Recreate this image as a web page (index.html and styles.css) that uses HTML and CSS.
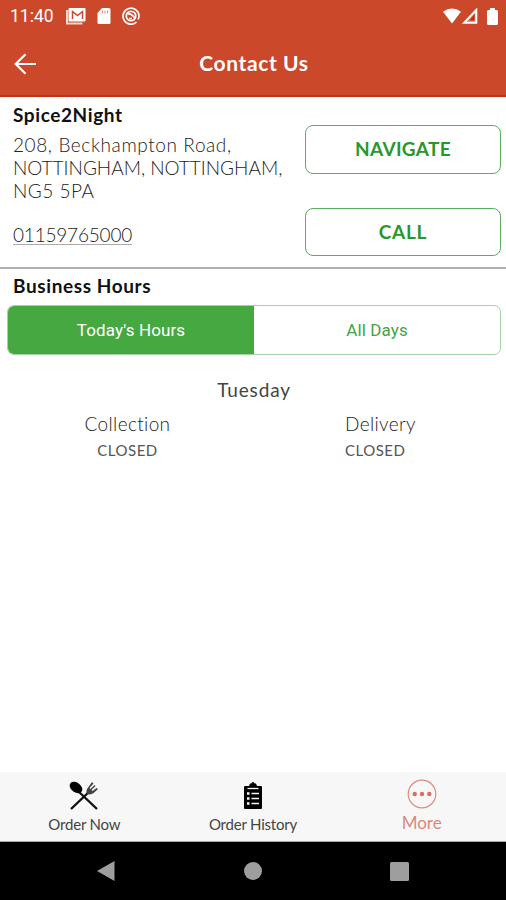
FILE: index.html
```html
<!DOCTYPE html>
<html lang="en">
  <head>
    <meta charset="UTF-8" />
    <meta name="viewport" content="width=device-width, initial-scale=1.0" />
    <title>Contact Us</title>
    <link rel="stylesheet" href="styles.css">
  </head>
  <body>
    <div class="status-bar">
      <span class="time">11:40</span>
      <svg class="status-mail" width="20" height="18" viewBox="0 0 20 18">
        <path d="M1 3v13.500h15.500" fill="none" stroke="#f6d9d1" stroke-width="2" />
        <rect x="2.500" y="1" width="17" height="13.500" rx="1" fill="#fff" />
        <path d="M6.500 12V4.500l5 4 5-4V12" fill="none" stroke="#cb482a" stroke-width="1.500" />
      </svg>
      <svg class="status-card" width="14" height="16" viewBox="0 0 14 16">
        <path d="M5 0h7q1.500 0 1.500 1.500v13q0 1.500-1.500 1.500H2q-1.500 0-1.500-1.500V5z" fill="#fff" />
        <path d="M5.500 2.500v3M8 2.500v3M10.500 2.500v3" stroke="#e08a74" />
      </svg>
      <svg class="status-sync" width="18" height="18" viewBox="0 0 18 18" fill="none" stroke="#fff">
        <path d="M14.500 15A8 8 0 1 1 17 9q0 2-1 3.500" stroke-width="1.700" />
        <circle cx="9" cy="9" r="4.700" stroke-width="1.800" />
        <path d="M5.500 7q4-1 7 4M7 11.500h3" stroke-width="1.700" />
      </svg>
      <div class="status-right">
        <svg width="18" height="16" viewBox="0 0 18 16"><path d="M0 3.800Q9-3 18 3.800L9 15.500z" fill="#fff" /></svg>
        <svg width="16" height="16" viewBox="0 0 16 16">
          <path d="M14.300 2v12.800H2z" fill="#dc7a62" stroke="#fff" stroke-width="2" />
          <path d="M12.500 6v6.500h-5z" fill="#c12b12" />
        </svg>
        <svg width="11" height="17" viewBox="0 0 11 17"><path d="M3 2V0h5v2h1.500q1.500 0 1.500 1.500v12Q11 17 9.500 17h-8Q0 17 0 15.500v-12Q0 2 1.500 2z" fill="#fff" /></svg>
      </div>
    </div>

    <div class="header">
      <svg class="back" width="22" height="22" viewBox="0 0 22 22">
        <path d="M22 11H2M11.500 1.200L1.700 11l9.800 9.800" fill="none" stroke="#fff" stroke-width="2.200" />
      </svg>
      <h1>Contact Us</h1>
    </div>

    <div class="content">
      <div class="info">
        <div class="details">
          <h2 class="name">Spice2Night</h2>
          <p class="address">
            <span class="street">208, Beckhampton Road,</span><br>
            NOTTINGHAM, NOTTINGHAM,<br>
            <span class="postcode">NG5 5PA</span>
          </p>
          <a class="phone">01159765000</a>
        </div>
        <div class="actions">
          <button class="btn">NAVIGATE</button>
          <button class="btn btn-call">CALL</button>
        </div>
      </div>

      <h2 class="hours-title">Business Hours</h2>
      <div class="tabs">
        <div class="tab active">Today's Hours</div>
        <div class="tab">All Days</div>
      </div>

      <div class="day">Tuesday</div>
      <div class="hours">
        <div class="slot">
          <span class="label">Collection</span>
          <span class="closed">CLOSED</span>
        </div>
        <div class="slot slot-delivery">
          <span class="label">Delivery</span>
          <span class="closed">CLOSED</span>
        </div>
      </div>
    </div>

    <div class="footer">
      <div class="footer-item">
        <svg width="30" height="30" viewBox="0 0 30 30">
          <path d="M9 10l19 18M22 9L2 28" stroke="#111" stroke-width="2.400" />
          <ellipse cx="7" cy="6.500" rx="7" ry="4.900" transform="rotate(38 7 6.500)" fill="#000" />
          <path d="M18 8q-2 5 2 5.500 4 0 9-5.500l-1.500-1-4 3-1-1 4-4-1-1-4 4-1-1L24.500 2.500 23 1z" fill="#444" />
        </svg>
        <span>Order Now</span>
      </div>
      <div class="footer-item">
        <svg width="20" height="30" viewBox="0 0 20 30">
          <path d="M2 5h4l1-2.500h1.500Q8.500 1 10 1t1.500 1.500H13L14 5h4q1 0 1 1v21q0 1-1 1H2q-1 0-1-1V6q0-1 1-1z" fill="#000" />
          <path d="M4.500 7.500h11" stroke="#f7f7f7" stroke-width="1.300" />
          <path d="M4 12.500h2.500M4 17.500h2.500M4 22.500h2.500" stroke="#f7f7f7" stroke-width="2.500" />
          <path d="M8.500 12.500H16M8.500 17.500H16M8.500 22.500H16" stroke="#f7f7f7" stroke-width="1.500" />
        </svg>
        <span>Order History</span>
      </div>
      <div class="footer-item active">
        <svg width="30" height="30" viewBox="0 0 30 30">
          <circle cx="15" cy="15" r="13.800" fill="none" stroke="#dc8d7d" stroke-width="1.200" />
          <g fill="#d4705c"><circle cx="7.700" cy="15" r="2.200" /><circle cx="15" cy="15" r="2.200" /><circle cx="22.300" cy="15" r="2.200" /></g>
        </svg>
        <span>More</span>
      </div>
    </div>

    <div class="nav-bar">
      <svg width="18" height="20" viewBox="0 0 18 20"><path d="M0 10L17.500 0v20z" fill="#9e9e9e" /></svg>
      <svg width="18" height="18" viewBox="0 0 18 18"><circle cx="9" cy="9" r="9" fill="#9e9e9e" /></svg>
      <svg width="19" height="19" viewBox="0 0 19 19"><rect width="19" height="19" rx="1.500" fill="#9e9e9e" /></svg>
    </div>
  </body>
</html>
```
FILE: styles.css
```css
* {
  box-sizing: border-box;
}

body {
  font-family: Lato, "Open Sans", sans-serif;
  margin: 0;
  background-color: #fff;
  display: flex;
  flex-direction: column;
  height: 100vh;
  color: #111;
}

h1, h2, p {
  margin: 0;
}

svg {
  flex-shrink: 0;
}

.status-bar {
  height: 32px;
  padding-left: 10px;
  padding-right: 8px;
  background-color: #cb482a;
  color: #fff;
  display: flex;
  align-items: center;
}

.time {
  font-family: Roboto, sans-serif;
  font-size: 17.5px;
  width: 56px;
}

.status-mail {
  margin-right: 11px;
}

.status-card {
  margin-right: 11px;
}

.status-right {
  margin-left: auto;
  display: flex;
  align-items: center;
  gap: 1px;
}

.status-right svg:last-child {
  margin-left: 8px;
}

.header {
  height: 65px;
  padding: 0 14px;
  background-color: #cb482a;
  border-bottom: 2px solid #c1301a;
  color: #fff;
  display: grid;
  grid-template-columns: 22px 1fr 22px;
  align-items: center;
}

.header h1 {
  font-size: 21px;
  letter-spacing: 0.6px;
  padding: 0 0 2px 2px;
  text-align: center;
}

.content {
  flex-grow: 1;
}

.info {
  height: 172px;
  padding: 6px 5px 0 13px;
  border-bottom: 2px solid #b0b0b0;
  display: flex;
  justify-content: space-between;
}

.name,
.hours-title {
  font-size: 19px;
  line-height: 23px;
  letter-spacing: 0.6px;
}

.address {
  margin-top: 7px;
  font-size: 19px;
  font-weight: 300;
  line-height: 23px;
  letter-spacing: 0;
  color: #222;
  white-space: nowrap;
}

.street {
  letter-spacing: 0.6px;
}

.postcode {
  letter-spacing: 0.5px;
}

.phone {
  display: inline-block;
  margin-top: 24px;
  font-size: 19px;
  font-weight: 300;
  line-height: 18px;
  letter-spacing: -0.2px;
  color: #222;
  border-bottom: 1px solid #aaa;
}

.actions {
  width: 196px;
  padding-top: 22px;
  display: flex;
  flex-direction: column;
  gap: 34px;
}

.btn {
  height: 49px;
  padding: 0 0 2px;
  font-family: inherit;
  font-size: 19px;
  font-weight: bold;
  letter-spacing: 0.3px;
  color: #27982c;
  background-color: #fff;
  border: 1px solid #5cad60;
  border-radius: 8px;
}

.btn-call {
  height: 48px;
  letter-spacing: 0.7px;
}

.hours-title {
  padding: 5px 13px 0;
}

.tabs {
  height: 50px;
  margin: 8px 5px 0 7px;
  border: 1px solid #a5d1a6;
  border-radius: 7px;
  overflow: hidden;
  display: flex;
}

.tab {
  flex: 1;
  display: flex;
  align-items: center;
  justify-content: center;
  font-family: Roboto, sans-serif;
  font-size: 17px;
  letter-spacing: 0.12px;
  color: #44a445;
}

.tab.active {
  background-color: #46a840;
  color: #fff;
}

.day {
  margin-top: 23px;
  padding-left: 2px;
  text-align: center;
  font-size: 19px;
  line-height: 23px;
  letter-spacing: 0.85px;
  color: #444;
}

.hours {
  margin-top: 11px;
  display: grid;
  grid-template-columns: 1fr 1fr;
}

.slot {
  padding-left: 2px;
  display: flex;
  flex-direction: column;
  align-items: center;
}

.slot-delivery {
  padding-left: 92px;
  align-items: flex-start;
}

.label {
  font-size: 19px;
  font-weight: 300;
  line-height: 23px;
  letter-spacing: 0.35px;
  color: #222;
}

.closed {
  margin-top: 4px;
  font-size: 15px;
  line-height: 22px;
  letter-spacing: 0.5px;
  color: #555;
}

.footer {
  height: 70px;
  background-color: #f7f7f7;
  border-bottom: 1px solid #aaa;
  display: flex;
}

.footer-item {
  flex: 1;
  padding-top: 9px;
  display: flex;
  flex-direction: column;
  align-items: center;
  font-size: 15px;
  line-height: 26px;
  letter-spacing: -0.2px;
  color: #444;
}

.footer-item.active {
  padding-top: 7px;
  font-size: 17px;
  line-height: 28px;
  letter-spacing: 0;
  color: #dc8878;
}

.nav-bar {
  height: 58px;
  padding: 0 97px;
  background-color: #000;
  display: flex;
  align-items: center;
  justify-content: space-between;
}
```
